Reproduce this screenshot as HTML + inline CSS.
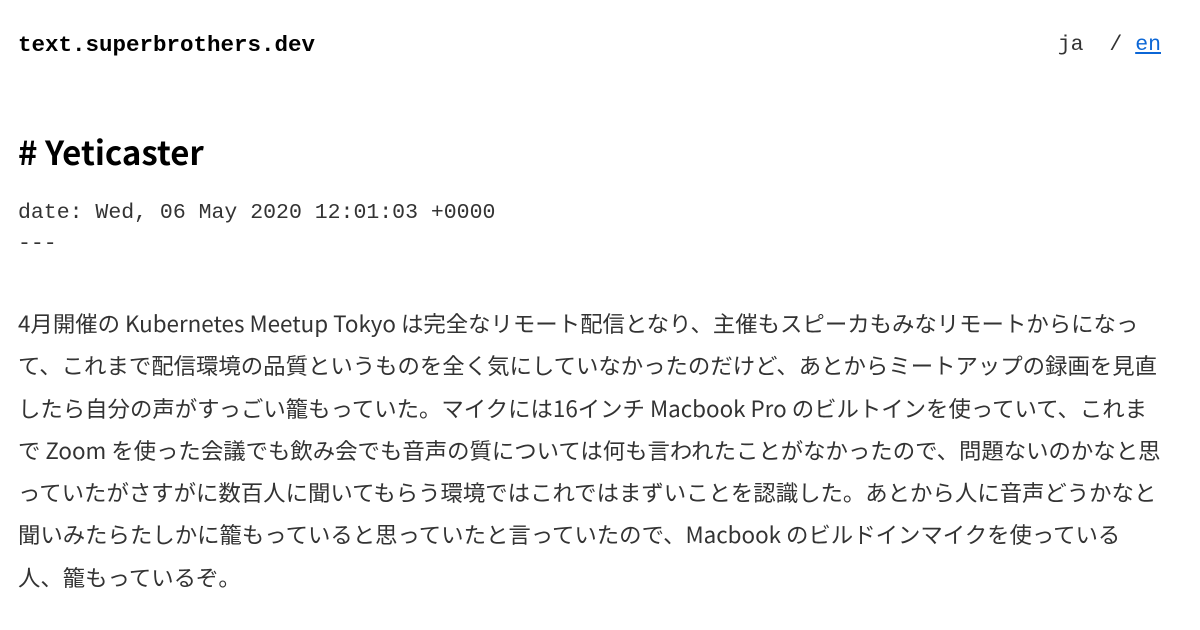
<!DOCTYPE html>
<html><head><meta charset="utf-8"><style>
html,body{margin:0;padding:0;background:#fff;width:1200px;height:630px;overflow:hidden}
body{font-family:"Liberation Sans","Noto Sans CJK JP",sans-serif;color:#333}
.hd{position:absolute;top:31px;left:18px;font-family:"Liberation Mono","Noto Sans CJK JP",monospace;font-weight:bold;font-size:22.5px;color:#000;line-height:28px}
.lang{position:absolute;top:31px;right:39px;font-family:"Liberation Mono",monospace;font-size:21.5px;color:#333;line-height:28px;white-space:pre}
.lang a{color:#0b66d6;text-decoration:underline}
h1{position:absolute;top:129px;left:18px;margin:0;font-size:33px;font-weight:bold;color:#000;line-height:44px;font-family:"Noto Sans CJK JP","Liberation Sans",sans-serif}
.date{position:absolute;top:198px;left:18px;font-family:"Liberation Mono",monospace;font-size:21.5px;line-height:31px;color:#333;white-space:pre}
.p{position:absolute;top:302px;left:18px;width:1170px;font-size:22.4px;line-height:42.3px;white-space:nowrap;color:#333;font-family:"Noto Sans CJK JP","Liberation Sans",sans-serif}
</style></head><body>
<div class="hd">text.superbrothers.dev</div>
<div class="lang">ja  / <a>en</a></div>
<h1># Yeticaster</h1>
<div class="date">date: Wed, 06 May 2020 12:01:03 +0000
---</div>
<div class="p">4月開催の Kubernetes Meetup Tokyo は完全なリモート配信となり、主催もスピーカもみなリモートからになっ<br>て、これまで配信環境の品質というものを全く気にしていなかったのだけど、あとからミートアップの録画を見直<br>したら自分の声がすっごい籠もっていた。マイクには16インチ Macbook Pro のビルトインを使っていて、これま<br>で Zoom を使った会議でも飲み会でも音声の質については何も言われたことがなかったので、問題ないのかなと思<br>っていたがさすがに数百人に聞いてもらう環境ではこれではまずいことを認識した。あとから人に音声どうかなと<br>聞いみたらたしかに籠もっていると思っていたと言っていたので、Macbook のビルドインマイクを使っている<br>人、籠もっているぞ。</div>
</body></html>
